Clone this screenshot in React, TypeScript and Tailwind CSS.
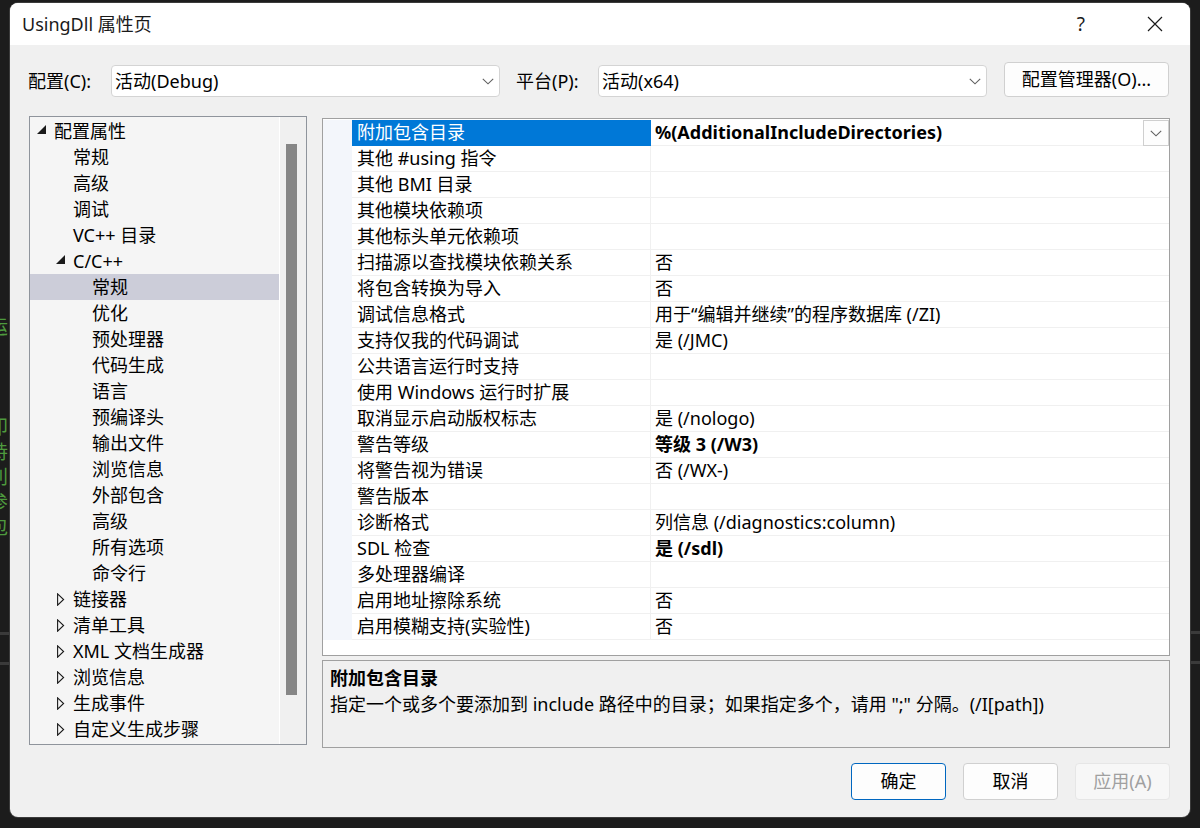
import React from "react";

const FONT = "font-['Noto_Sans','Noto_Sans_CJK_SC',sans-serif]";

type TreeItem = { label: string; level: number; state?: "open" | "closed"; selected?: boolean };

const treeItems: TreeItem[] = [
  { label: "配置属性", level: 0, state: "open" },
  { label: "常规", level: 1 },
  { label: "高级", level: 1 },
  { label: "调试", level: 1 },
  { label: "VC++ 目录", level: 1 },
  { label: "C/C++", level: 1, state: "open" },
  { label: "常规", level: 2, selected: true },
  { label: "优化", level: 2 },
  { label: "预处理器", level: 2 },
  { label: "代码生成", level: 2 },
  { label: "语言", level: 2 },
  { label: "预编译头", level: 2 },
  { label: "输出文件", level: 2 },
  { label: "浏览信息", level: 2 },
  { label: "外部包含", level: 2 },
  { label: "高级", level: 2 },
  { label: "所有选项", level: 2 },
  { label: "命令行", level: 2 },
  { label: "链接器", level: 1, state: "closed" },
  { label: "清单工具", level: 1, state: "closed" },
  { label: "XML 文档生成器", level: 1, state: "closed" },
  { label: "浏览信息", level: 1, state: "closed" },
  { label: "生成事件", level: 1, state: "closed" },
  { label: "自定义生成步骤", level: 1, state: "closed" },
];

type Prop = { name: string; value: string; bold?: boolean; selected?: boolean };

const props: Prop[] = [
  { name: "附加包含目录", value: "%(AdditionalIncludeDirectories)", bold: true, selected: true },
  { name: "其他 #using 指令", value: "" },
  { name: "其他 BMI 目录", value: "" },
  { name: "其他模块依赖项", value: "" },
  { name: "其他标头单元依赖项", value: "" },
  { name: "扫描源以查找模块依赖关系", value: "否" },
  { name: "将包含转换为导入", value: "否" },
  { name: "调试信息格式", value: "用于“编辑并继续”的程序数据库 (/ZI)" },
  { name: "支持仅我的代码调试", value: "是 (/JMC)" },
  { name: "公共语言运行时支持", value: "" },
  { name: "使用 Windows 运行时扩展", value: "" },
  { name: "取消显示启动版权标志", value: "是 (/nologo)" },
  { name: "警告等级", value: "等级 3 (/W3)", bold: true },
  { name: "将警告视为错误", value: "否 (/WX-)" },
  { name: "警告版本", value: "" },
  { name: "诊断格式", value: "列信息 (/diagnostics:column)" },
  { name: "SDL 检查", value: "是 (/sdl)", bold: true },
  { name: "多处理器编译", value: "" },
  { name: "启用地址擦除系统", value: "否" },
  { name: "启用模糊支持(实验性)", value: "否" },
];

const Chevron = () => (
  <svg width="12" height="7" viewBox="0 0 12 7" fill="none">
    <path d="M0.8 0.8 L6 5.8 L11.2 0.8" stroke="#5f5f5f" strokeWidth="1.1" />
  </svg>
);

const Combo = ({ text }: { text: string }) => (
  <div className="w-[389px] h-[32px] bg-white border border-[#d4d4d4] rounded-[4px] flex items-center justify-between pl-[3px] pr-[5px]">
    <span className="text-[18px] text-black">{text}</span>
    <Chevron />
  </div>
);

const Expander = ({ state }: { state?: "open" | "closed" }) => {
  if (state === "open")
    return (
      <svg width="9" height="9" viewBox="0 0 9 9" className="mt-[-3px]">
        <path d="M9 0 L9 9 L0 9 Z" fill="#1a1a1a" />
      </svg>
    );
  if (state === "closed")
    return (
      <svg width="8" height="13" viewBox="0 0 8 13" className="ml-[1px]">
        <path d="M0.6 0.8 L6.6 6.5 L0.6 12.2 Z" fill="none" stroke="#1a1a1a" strokeWidth="1.1" />
      </svg>
    );
  return null;
};

const Tree = () => (
  <div className="w-[278px] h-[629px] border border-[#8f949c] bg-[#f5f5f5] flex">
    <div className="flex-1 pt-px">
      {treeItems.map((item, i) => (
        <div
          key={i}
          className={`h-[26px] flex items-center ${item.selected ? "bg-[#cccdd9]" : ""} ${
            item.level === 0 ? "pl-[7px]" : item.level === 1 ? "pl-[26px]" : "pl-[45px]"
          }`}
        >
          <div className="w-[17px] flex items-center">
            <Expander state={item.state} />
          </div>
          <span className="text-[18px] text-black leading-[26px] whitespace-nowrap">{item.label}</span>
        </div>
      ))}
    </div>
    <div className="w-[27px] border-l border-white bg-[#f0f0f0] pl-[6px] pt-[27px]">
      <div className="w-[11px] h-[551px] bg-[#868686]" />
    </div>
  </div>
);

const Grid = () => (
  <div className="h-[538px] border border-[#a0a0a0] bg-white pt-px">
    {props.map((p, i) => (
      <div key={i} className="h-[26px] flex">
        <div className="w-[29px] bg-[#f3f6fb]" />
        <div
          className={`w-[299px] pl-[5px] border-r border-b text-[18px] leading-[25px] whitespace-nowrap ${
            p.selected ? "bg-[#0078d7] text-white border-[#0078d7]" : "text-black border-[#f0f0f0]"
          }`}
        >
          {p.name}
        </div>
        <div
          className={`flex-1 pl-[4px] border-b border-[#f0f0f0] text-[18px] leading-[25px] whitespace-nowrap text-black flex justify-between ${
            p.bold ? "font-bold" : ""
          }`}
        >
          <span>{p.value}</span>
          {p.selected && (
            <div className="w-[26px] h-[26px] border border-[#cfcfcf] bg-[#fdfdfd] flex items-center justify-center">
              <Chevron />
            </div>
          )}
        </div>
      </div>
    ))}
  </div>
);

const Button = ({ label, kind }: { label: string; kind?: "default" | "disabled" }) => (
  <div
    className={`w-[95px] h-[37px] rounded-[4px] flex items-center justify-center text-[18px] ${
      kind === "default"
        ? "border border-[#0067c0] bg-[#fdfdfd] text-black"
        : kind === "disabled"
        ? "border border-[#e6e6e6] bg-[#f7f7f7] text-[#a0a0a0]"
        : "border border-[#d0d0d0] bg-[#fdfdfd] text-black"
    }`}
  >
    {label}
  </div>
);

const greenLines = ["“", "", "运", "", "", "", "印", "持", "利", "参", "包", "", "′"];

const EdgeStrip = ({ side }: { side: "left" | "right" }) => (
  <div className={`${side === "left" ? "w-[10px]" : "w-[10px]"} h-full overflow-hidden`}>
    {side === "left" ? (
      <div className="pt-[265px] w-[30px] -ml-[11px] text-[#4e9a3e] text-[19px] leading-[25px]">
        {greenLines.map((g, i) => (
          <div key={i} className="h-[25px]">
            {g}
          </div>
        ))}
      </div>
    ) : (
      <div className="h-[631px]" />
    )}
    <div className={side === "left" ? "" : ""}>
      <div className={`h-[3px] bg-[#3a3a3a] ${side === "left" ? "mt-[42px]" : ""}`} />
      <div className="h-[27px]" />
      <div className="h-[3px] bg-[#3a3a3a]" />
    </div>
  </div>
);

export default function App() {
  return (
    <div className={`${FONT} w-[1200px] h-[828px] bg-[#1c1c1c] flex overflow-hidden`}>
      <EdgeStrip side="left" />
      <div className="w-[1180px] h-[814px] mt-[3px] rounded-[8px] bg-[#f0f0f0] overflow-hidden flex flex-col shadow-[0_0_0_1px_#3b3b3b]">
        {/* title bar */}
        <div className="h-[42px] bg-white flex items-center shrink-0">
          <span className="pl-[12px] text-[18px] text-[#1a1a1a] flex-1">UsingDll 属性页</span>
          <span className="text-[19px] text-[#1a1a1a] mr-[62px]">?</span>
          <svg width="16" height="16" viewBox="0 0 16 16" className="mr-[27px]">
            <path d="M1 1 L15 15 M15 1 L1 15" stroke="#1a1a1a" strokeWidth="1.2" />
          </svg>
        </div>

        {/* config row */}
        <div className="flex items-end mt-[17px] pl-[18px] h-[35px]">
          <div className="w-[83px] h-[32px] flex items-center text-[18px] text-black">配置(C):</div>
          <Combo text="活动(Debug)" />
          <div className="w-[98px] h-[32px] flex items-center pl-[16px] text-[18px] text-black">平台(P):</div>
          <Combo text="活动(x64)" />
          <div className="ml-[17px] w-[165px] h-[35px] border border-[#d0d0d0] bg-[#fdfdfd] rounded-[4px] flex items-center justify-center text-[18px] text-black">
            配置管理器(O)...
          </div>
        </div>

        {/* main */}
        <div className="flex mt-[19px] pl-[19px]">
          <Tree />
          <div className="ml-[15px] w-[848px] flex flex-col pt-[2px]">
            <Grid />
            <div className="mt-[4px] h-[88px] border border-[#a0a0a0] bg-[#f0f0f0] px-[7px] pt-[4px]">
              <div className="text-[18px] font-bold text-black leading-[26px]">附加包含目录</div>
              <div className="text-[18px] text-black leading-[26px] whitespace-nowrap">
                指定一个或多个要添加到 include 路径中的目录；如果指定多个，请用 ";" 分隔。(/I[path])
              </div>
            </div>
          </div>
        </div>

        {/* buttons */}
        <div className="flex justify-end gap-[17px] pr-[20px] mt-[15px]">
          <Button label="确定" kind="default" />
          <Button label="取消" />
          <Button label="应用(A)" kind="disabled" />
        </div>
      </div>
      <EdgeStrip side="right" />
    </div>
  );
}
